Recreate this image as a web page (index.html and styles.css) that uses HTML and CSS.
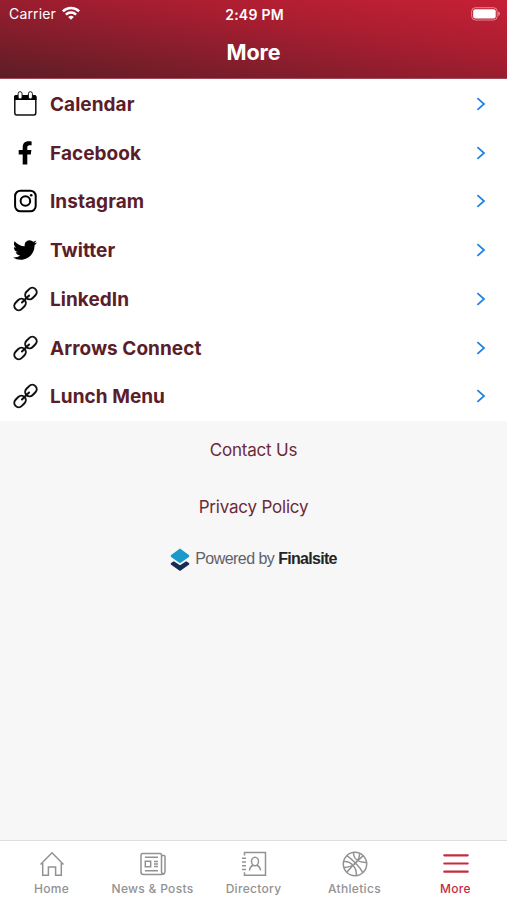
FILE: index.html
```html
<!DOCTYPE html>
<html lang="en">
<head>
<meta charset="utf-8">
<title>More</title>
<link rel="stylesheet" href="styles.css">
</head>
<body>
<svg class="defs" aria-hidden="true">
  <symbol id="chevron" viewBox="0 0 10 16"><path d="M1.400 2.100 8 8l-6.600 5.900" fill="none" stroke="#2183e4" stroke-width="1.800"/></symbol>
  <symbol id="link" viewBox="0 0 24 24"><g transform="rotate(-45 12.500 12)" fill="none" stroke="#111" stroke-width="2"><rect x="-1.500" y="7.600" width="12.600" height="8.800" rx="4.400"/><rect x="13.900" y="7.600" width="12.600" height="8.800" rx="4.400"/><path d="M7.500 12h10" stroke-width="2" stroke-linecap="round"/></g></symbol>
</svg>
<div class="app">
  <header class="header">
    <div class="status">
      <div class="carrier"><span>Carrier</span>
        <svg width="18" height="14" viewBox="0 0 18 14" fill="none" stroke="#fff" stroke-width="2.500"><path d="M.9 5.300a11.500 11.500 0 0 1 16.200 0M3.900 8.600a7.200 7.200 0 0 1 10.200 0"/><path d="M9 13.700 6.200 11a4 4 0 0 1 5.600 0z" fill="#fff" stroke="none"/></svg>
      </div>
      <span class="time">2:49 PM</span>
      <svg class="battery" width="29" height="14" viewBox="0 0 29 14"><rect x=".7" y=".7" width="25.500" height="12.300" rx="3.600" fill="none" stroke="#df8b93" stroke-width="1"/><rect x="2.200" y="2.200" width="22.500" height="9.300" rx="2" fill="#fff"/><path d="M27.200 4.600q1.800.6 1.800 2.200t-1.800 2.200z" fill="#df8b93"/></svg>
    </div>
    <h1 class="title">More</h1>
  </header>
  <main>
    <ul class="list">
      <li class="row"><svg class="icon" viewBox="0 0 24 24"><rect x="1.800" y="3.800" width="21" height="19.100" rx="1.800" fill="none" stroke="#111" stroke-width="1.500"/><path d="M1 8V5q0-2 2-2h18.500q2 0 2 2v3z"/><rect x="5.100" y="-.3" width="4" height="7.300" rx="2" fill="#fff" stroke="#111" stroke-width="1"/><rect x="15.400" y="-.3" width="4" height="7.300" rx="2" fill="#fff" stroke="#111" stroke-width="1"/></svg><span class="label">Calendar</span><svg class="chevron"><use href="#chevron"/></svg></li>
      <li class="row"><svg class="icon" viewBox="0 0 24 24"><path d="M9.700 23.500V13.400H5.700V9h4V6.300c0-4 2.300-6 5.700-6 1.600 0 3.200.2 3.200.2v3.800h-1.900c-1.900 0-2.400.9-2.400 2.300V9h4.100l-.6 4.400h-3.500v10.100z"/></svg><span class="label">Facebook</span><svg class="chevron"><use href="#chevron"/></svg></li>
      <li class="row"><svg class="icon" viewBox="0 0 24 24" fill="none" stroke="#000" stroke-width="2"><rect x="2.100" y="1.700" width="20.600" height="20.600" rx="5.300"/><circle cx="12.400" cy="12" r="4.800"/><circle cx="18.200" cy="6.200" r="1.300" fill="#000" stroke="none"/></svg><span class="label">Instagram</span><svg class="chevron"><use href="#chevron"/></svg></li>
      <li class="row"><svg class="icon" viewBox="0 0 24 24"><path d="M23.953 4.570a10 10 0 0 1-2.825.775 4.958 4.958 0 0 0 2.163-2.723 9.900 9.900 0 0 1-3.127 1.184 4.920 4.920 0 0 0-8.384 4.482C7.690 8.095 4.067 6.130 1.640 3.162a4.822 4.822 0 0 0-.666 2.475c0 1.710.87 3.213 2.188 4.096a4.904 4.904 0 0 1-2.228-.616v.06a4.923 4.923 0 0 0 3.946 4.827 4.996 4.996 0 0 1-2.212.085 4.936 4.936 0 0 0 4.604 3.417 9.867 9.867 0 0 1-6.102 2.105c-.39 0-.779-.023-1.170-.067a13.995 13.995 0 0 0 7.557 2.209c9.053 0 13.998-7.496 13.998-13.985 0-.21 0-.42-.015-.63A9.935 9.935 0 0 0 24 4.590z"/></svg><span class="label">Twitter</span><svg class="chevron"><use href="#chevron"/></svg></li>
      <li class="row"><svg class="icon"><use href="#link"/></svg><span class="label">LinkedIn</span><svg class="chevron"><use href="#chevron"/></svg></li>
      <li class="row"><svg class="icon"><use href="#link"/></svg><span class="label">Arrows Connect</span><svg class="chevron"><use href="#chevron"/></svg></li>
      <li class="row"><svg class="icon"><use href="#link"/></svg><span class="label">Lunch Menu</span><svg class="chevron"><use href="#chevron"/></svg></li>
    </ul>
    <div class="links">
      <a class="text-link">Contact Us</a>
      <a class="text-link">Privacy Policy</a>
      <div class="powered"><svg width="20" height="24" viewBox="0 0 20 24"><path d="m.8 15.300 3-2 6.200 4 6.200-4 3 2v1.300L10 23 .8 16.600z" fill="#182b55"/><path d="m10 .6 9.200 6.700v1.500L10 15.300.8 8.800V7.300z" fill="#1b9aca"/></svg><span class="by">Powered by <b>Finalsite</b></span></div>
    </div>
  </main>
  <nav class="tabs">
    <a class="tab"><svg class="tab-icon" viewBox="0 0 26 26"><path d="M1.500 13.500 13 1.700l11.500 11.800M3.700 12v12.300h5.700v-8.200h7.200v8.200h5.700V12"/></svg><span>Home</span></a>
    <a class="tab"><svg class="tab-icon" viewBox="0 0 26 26"><path d="M21.500 4.500H24q1 0 1 1V20q0 3.500-3.500 3.500h-18Q1 23.500 1 21V4q0-1.500 1.500-1.500H20q1.500 0 1.500 1.500v16.500q0 2.500 2 2M5 6.200h13M5 19.700h13M14 10.500h4M14 13h4M14 15.500h4M5.300 10.300h5.400v5.400H5.300z"/></svg><span>News &amp; Posts</span></a>
    <a class="tab"><svg class="tab-icon" viewBox="0 0 26 26"><path d="M3.500 4.500v-3h21v22.700h-21v-3M1 7.200h4M1 11h4M1 14.800h4M1 18.600h4M8.500 19.500c.3-3 1.400-4.500 3.600-5.300M19.500 19.500c-.3-3-1.400-4.500-3.600-5.300"/><ellipse cx="14" cy="10.500" rx="3.500" ry="4.200"/></svg><span>Directory</span></a>
    <a class="tab"><svg class="tab-icon" viewBox="0 0 26 26"><circle cx="13" cy="13" r="11.700"/><path d="M4.700 4.700C10 8 18 16 20.800 21.700M21.300 4.700C15.500 9.500 8.500 16.500 4.700 21.300M11.500 1.500C11.500 7.500 16 11.500 24.600 11.500M1.500 10.500C9 10 15 16 14.300 24.700M1.700 16.500C7 16 11 14.500 13 13c3-3 4.500-6 4.700-10.700"/></svg><span>Athletics</span></a>
    <a class="tab active"><svg class="tab-icon" viewBox="0 0 26 26"><path d="M1.300 4.300h23.400M1.300 12.500h23.400M1.300 20.700h23.400"/></svg><span>More</span></a>
  </nav>
</div>
</body>
</html>
```
FILE: styles.css
```css
* { box-sizing: border-box; }
body { margin: 0; font-family: Inter, "Liberation Sans", sans-serif; }
.defs { position: absolute; width: 0; height: 0; }
.app { height: 900px; display: flex; flex-direction: column; background: #f7f7f7; }
.header { height: 79px; color: #fff; background: linear-gradient(to bottom left, #c62035 0%, #ad1e31 32%, #841d2c 68%, #5d1d26 100%); border-bottom: 1px solid #a04a59; }
.status { height: 27px; padding: 0 7px 0 9px; display: grid; grid-template-columns: 1fr auto 1fr; align-items: center; font-size: 14px; }
.carrier { display: flex; align-items: center; gap: 6px; letter-spacing: .15px; }
.carrier svg { margin-top: -2px; }
.time { font-weight: 600; font-size: 14px; letter-spacing: .25px; padding-top: 1px; }
.battery { justify-self: end; }
.title { margin: 0; text-align: center; font-size: 21.500px; font-weight: 700; line-height: 50px; letter-spacing: -.1px; }
main { flex: 1; }
.list { list-style: none; margin: 0; padding: 1px 0 0; height: 342px; background: #fff; }
.row { height: 48.780px; padding: 0 21.500px 1px 13px; display: flex; align-items: center; }
.icon { width: 24px; height: 24px; margin-right: 13px; flex: none; overflow: visible; }
#link { overflow: visible; }
.label { flex: 1; color: #5b1d2a; font-weight: 650; font-size: 19px; letter-spacing: .04px; padding-top: 1px; }
.chevron { width: 10px; height: 16px; }
.links { display: flex; flex-direction: column; align-items: center; padding-top: 1px; }
.text-link { color: #6c2938; font-size: 17px; line-height: 57px; letter-spacing: -.2px; }
.powered { display: flex; align-items: center; gap: 5px; height: 47px; color: #606268; font-family: "Liberation Sans", sans-serif; font-size: 16px; letter-spacing: -.55px; }
.by { margin-top: -1px; }
.powered b { color: #222429; letter-spacing: -.7px; }
.tabs { height: 60px; background: #fff; border-top: 1px solid #dedede; display: grid; grid-template-columns: repeat(5, 101px); justify-content: center; }
.tab { display: flex; flex-direction: column; align-items: center; padding-top: 10px; gap: 4px; color: #929292; font-size: 12px; font-weight: 500; line-height: 15px; letter-spacing: .3px; }
.tab-icon { width: 26px; height: 26px; fill: none; stroke: currentColor; stroke-width: 1.500; }
.active { color: #c62b40; }
.active .tab-icon { stroke-width: 2.200; stroke-linecap: round; }
```
